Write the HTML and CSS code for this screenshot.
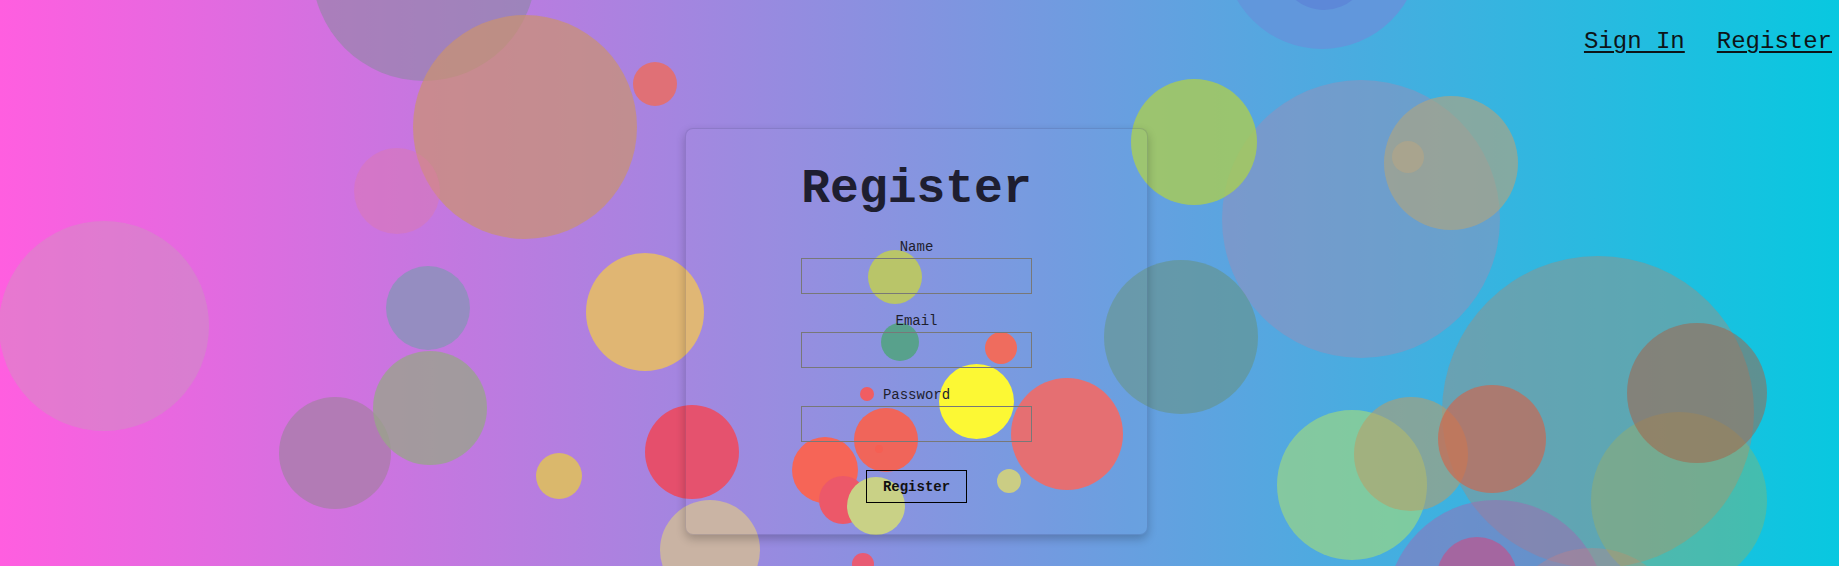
FILE: index.html
```html
<!DOCTYPE html>
<html lang="en">
<head>
<meta charset="utf-8">
<title>Register</title>
<link rel="stylesheet" href="styles.css">
</head>
<body>
<div class="bubbles">
  <span class="bubble" style="left:312px;top:-143px;width:224px;height:224px;background:rgba(130,140,150,0.5)"></span>
  <span class="bubble" style="left:413px;top:15px;width:224px;height:224px;background:rgba(202,147,110,0.7)"></span>
  <span class="bubble" style="left:633px;top:62px;width:44px;height:44px;background:#e07076"></span>
  <span class="bubble" style="left:354px;top:148px;width:86px;height:86px;background:rgba(222,122,164,0.4)"></span>
  <span class="bubble" style="left:-1px;top:221px;width:210px;height:210px;background:rgba(198,157,184,0.4)"></span>
  <span class="bubble" style="left:386px;top:266px;width:84px;height:84px;background:#958dc1"></span>
  <span class="bubble" style="left:279px;top:397px;width:112px;height:112px;background:#b27bb5"></span>
  <span class="bubble" style="left:373px;top:351px;width:114px;height:114px;background:rgba(151,166,136,0.75)"></span>
  <span class="bubble" style="left:536px;top:453px;width:46px;height:46px;background:#dab86c"></span>
  <span class="bubble" style="left:586px;top:253px;width:118px;height:118px;background:#e0b673"></span>
  <span class="bubble" style="left:645px;top:405px;width:94px;height:94px;background:#e54f6c"></span>
  <span class="bubble" style="left:660px;top:500px;width:100px;height:100px;background:#c9b3a3"></span>
  <span class="bubble" style="left:1224px;top:-147px;width:196px;height:196px;background:#6197dc"></span>
  <span class="bubble" style="left:1279px;top:-80px;width:90px;height:90px;background:#5d88d8"></span>
  <span class="bubble" style="left:1222px;top:80px;width:278px;height:278px;background:rgba(160,140,180,0.45)"></span>
  <span class="bubble" style="left:1131px;top:79px;width:126px;height:126px;background:rgba(166,202,91,0.85)"></span>
  <span class="bubble" style="left:1384px;top:96px;width:134px;height:134px;background:rgba(172,164,131,0.67)"></span>
  <span class="bubble" style="left:1392px;top:141px;width:32px;height:32px;background:#a9a48e"></span>
  <span class="bubble" style="left:1104px;top:260px;width:154px;height:154px;background:rgba(101,147,134,0.6)"></span>
  <span class="bubble" style="left:1011px;top:378px;width:112px;height:112px;background:#e56d70"></span>
  <span class="bubble" style="left:1442px;top:256px;width:312px;height:312px;background:rgba(150,146,134,0.5)"></span>
  <span class="bubble" style="left:1277px;top:410px;width:150px;height:150px;background:rgba(166,222,116,0.6)"></span>
  <span class="bubble" style="left:1354px;top:397px;width:114px;height:114px;background:rgba(188,156,100,0.55)"></span>
  <span class="bubble" style="left:1438px;top:385px;width:108px;height:108px;background:rgba(217,95,67,0.6)"></span>
  <span class="bubble" style="left:1386px;top:500px;width:220px;height:220px;background:rgba(167,100,178,0.45)"></span>
  <span class="bubble" style="left:1437px;top:537px;width:80px;height:80px;background:#a466a0"></span>
  <span class="bubble" style="left:1499px;top:548px;width:186px;height:186px;background:rgba(200,130,130,0.35)"></span>
  <span class="bubble" style="left:1591px;top:412px;width:176px;height:176px;background:rgba(183,175,64,0.3)"></span>
  <span class="bubble" style="left:1627px;top:323px;width:140px;height:140px;background:rgba(169,94,65,0.5)"></span>
  <span class="bubble" style="left:868px;top:250px;width:54px;height:54px;background:#b8c466"></span>
  <span class="bubble" style="left:881px;top:323px;width:38px;height:38px;background:#55a08a"></span>
  <span class="bubble" style="left:985px;top:332px;width:32px;height:32px;background:#ef6a5b"></span>
  <span class="bubble" style="left:860px;top:387px;width:14px;height:14px;background:#f05a5f"></span>
  <span class="bubble" style="left:939px;top:364px;width:75px;height:75px;background:#fcf830"></span>
  <span class="bubble" style="left:854px;top:408px;width:64px;height:64px;background:#f06257"></span>
  <span class="bubble" style="left:875px;top:445px;width:8px;height:8px;background:#f55c50"></span>
  <span class="bubble" style="left:792px;top:437px;width:66px;height:66px;background:#f66254"></span>
  <span class="bubble" style="left:819px;top:476px;width:48px;height:48px;background:#ec5566"></span>
  <span class="bubble" style="left:847px;top:477px;width:58px;height:58px;background:#c8d184"></span>
  <span class="bubble" style="left:997px;top:469px;width:24px;height:24px;background:#cacc82"></span>
  <span class="bubble" style="left:852px;top:553px;width:22px;height:22px;background:#e85b73"></span>
</div>

<nav class="topnav">
  <a href="#" class="navlink">Sign In</a>
  <a href="#" class="navlink">Register</a>
</nav>

<main class="main">
  <section class="card">
    <h1 class="title">Register</h1>
    <form class="form">
      <div class="field">
        <label class="label" for="name">Name</label>
        <input class="input" id="name" type="text">
      </div>
      <div class="field">
        <label class="label" for="email">Email</label>
        <input class="input" id="email" type="email">
      </div>
      <div class="field">
        <label class="label" for="password">Password</label>
        <input class="input" id="password" type="password">
      </div>
      <button class="button" type="button">Register</button>
    </form>
  </section>
</main>
</body>
</html>
```

FILE: styles.css
```css
* {
  box-sizing: border-box;
}

html, body {
  margin: 0;
  padding: 0;
}

body {
  position: relative;
  width: 1839px;
  height: 566px;
  overflow: hidden;
  background: linear-gradient(to right, #ff5ee0, #08c8e0);
  font-family: "Liberation Mono", "Courier New", monospace;
  color: #1d1d2b;
}

.bubbles {
  position: absolute;
  inset: 0;
  z-index: 0;
  overflow: hidden;
  pointer-events: none;
}

.bubble {
  position: absolute;
  border-radius: 50%;
  display: block;
}

.topnav {
  position: relative;
  z-index: 2;
  display: flex;
  justify-content: flex-end;
  gap: 32px;
  padding: 28px 7px 0 0;
  height: 55px;
}

.navlink {
  font-size: 24px;
  line-height: 27px;
  color: #0d1418;
  text-decoration: underline;
  text-underline-offset: 3px;
  text-decoration-thickness: 2px;
}

.main {
  position: relative;
  z-index: 1;
  display: flex;
  justify-content: center;
  padding: 73px 6px 0 0;
}

.card {
  width: 463px;
  height: 407px;
  border: 1px solid rgba(40, 40, 80, 0.16);
  border-radius: 8px;
  background: rgba(255, 255, 255, 0.02);
  box-shadow: 0 4px 10px rgba(0, 0, 0, 0.22);
  display: flex;
  flex-direction: column;
  align-items: center;
  padding-top: 33px;
}

.title {
  margin: 0;
  font-size: 48px;
  line-height: 54px;
  font-weight: bold;
  color: #1e1e30;
}

.form {
  display: flex;
  flex-direction: column;
  align-items: center;
  margin-top: 23px;
}

.field {
  display: flex;
  flex-direction: column;
  align-items: center;
  margin-bottom: 19px;
}

.label {
  font-size: 14px;
  line-height: 16px;
  color: #1e1e2e;
  margin-bottom: 3px;
}

.input {
  width: 231px;
  height: 36px;
  border: 1px solid #787878;
  background: transparent;
  outline: none;
  margin: 0;
  padding: 0 6px;
}

.button {
  margin-top: 9px;
  width: 101px;
  height: 33px;
  border: 1px solid #000;
  background: transparent;
  font-family: "Liberation Mono", "Courier New", monospace;
  font-size: 14px;
  font-weight: bold;
  color: #111;
  padding: 0;
}
```
